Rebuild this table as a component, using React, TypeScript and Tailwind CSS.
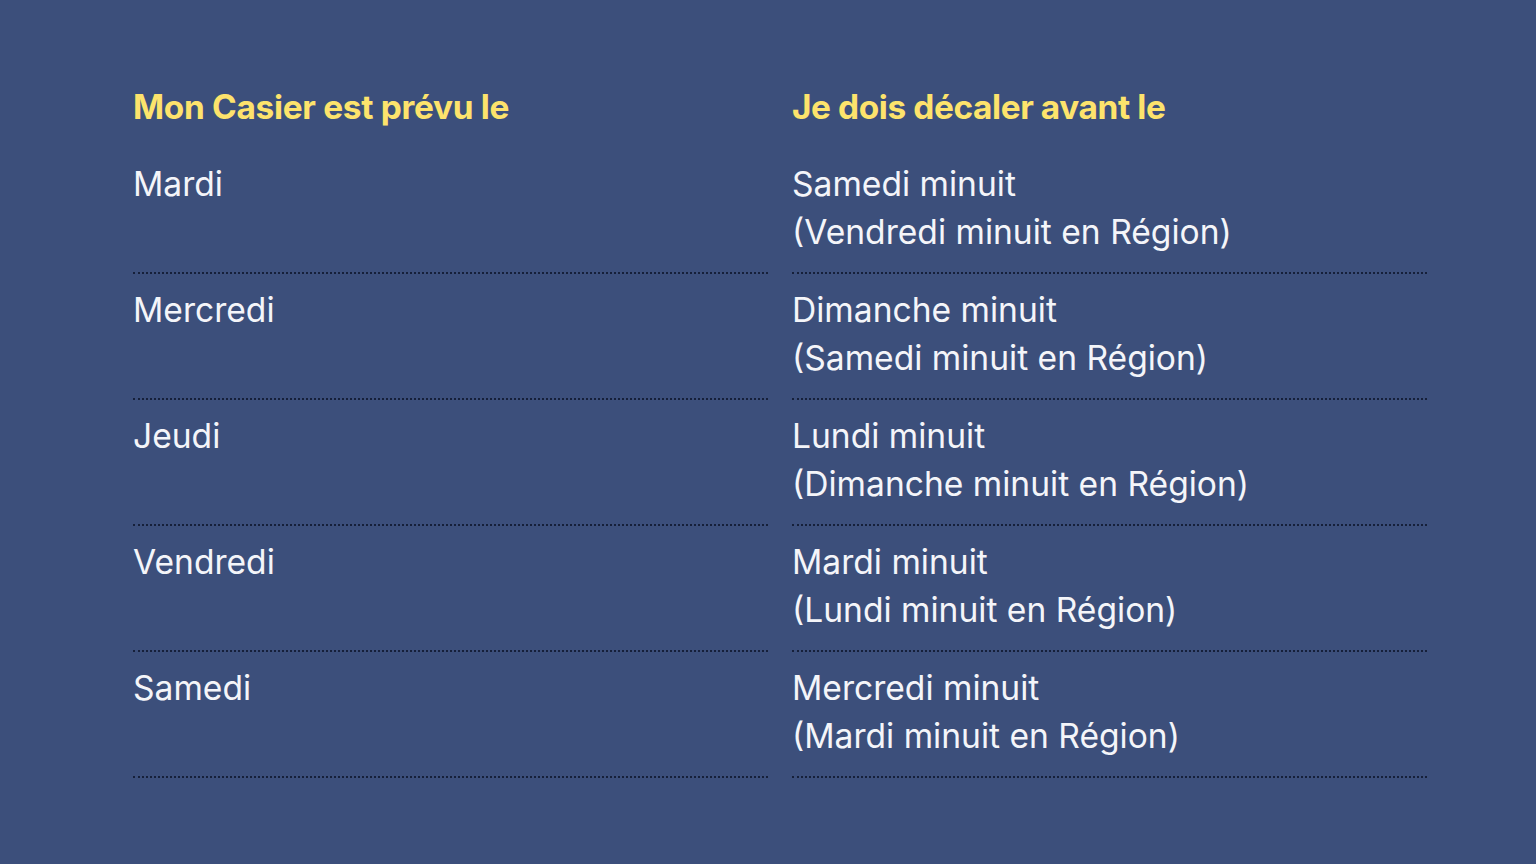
import React from "react";

const rows = [
  { day: "Mardi", until: "Samedi minuit", region: "(Vendredi minuit en Région)" },
  { day: "Mercredi", until: "Dimanche minuit", region: "(Samedi minuit en Région)" },
  { day: "Jeudi", until: "Lundi minuit", region: "(Dimanche minuit en Région)" },
  { day: "Vendredi", until: "Mardi minuit", region: "(Lundi minuit en Région)" },
  { day: "Samedi", until: "Mercredi minuit", region: "(Mardi minuit en Région)" },
];

export default function App() {
  return (
    <div className="w-[1536px] h-[864px] bg-[#3c4f7b] font-['Inter',sans-serif] text-[#f4f5f9] pt-[83px] pl-[133px] pr-[109px]">
      <div className="grid grid-cols-2 gap-x-6">
        <h2 className="text-[33.4px] leading-[48px] font-bold text-[#fde36c] tracking-[-0.3px]">Mon Casier est prévu le</h2>
        <h2 className="text-[33.4px] leading-[48px] font-bold text-[#fde36c] tracking-[-0.4px]">Je dois décaler avant le</h2>
      </div>
      <div className="mt-[29px]">
        {rows.map((r, i) => (
          <div key={r.day} className={`grid grid-cols-2 gap-x-6 text-[33.6px] leading-[48px] font-normal ${i === 0 ? "" : "pt-3"}`}>
            <div className="pb-4 border-b-2 border-dotted border-[#16203a]">{r.day}</div>
            <div className="pb-4 border-b-2 border-dotted border-[#16203a]">
              <div>{r.until}</div>
              <div>{r.region}</div>
            </div>
          </div>
        ))}
      </div>
    </div>
  );
}
